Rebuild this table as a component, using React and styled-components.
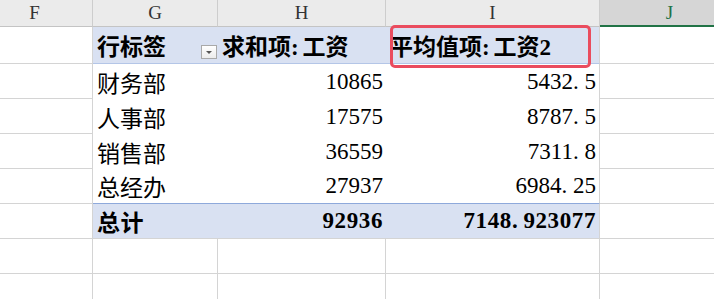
import React from "react";
import styled, { createGlobalStyle, css } from "styled-components";

const GlobalStyle = createGlobalStyle`
  html, body {
    margin: 0;
    padding: 0;
    background: #ffffff;
    overflow: hidden;
  }
  #root {
    width: 714px;
    height: 299px;
    overflow: hidden;
  }
`;

const GRID = "#d4d4d4";
const PIVOT_FILL = "#d9e1f2";
const PIVOT_LINE = "#b4c6e7";
const PIVOT_TOTAL_LINE = "#8ea9db";
const SELECT_GREEN = "#217346";

const FONT = `"Liberation Serif", "Noto Sans CJK SC", serif`;

// The sheet is scrolled a little to the right, so column F is partly hidden.
const Sheet = styled.div`
  display: grid;
  grid-template-columns: 116px 125px 168px 214px 140px;
  grid-template-rows: 27px 37px repeat(7, 35px);
  margin-left: -23px;
  font-family: ${FONT};
  color: #000;
`;

const ColHeader = styled.div`
  box-sizing: border-box;
  display: flex;
  align-items: center;
  justify-content: center;
  background: ${(p) => (p.$selected ? "#d6d6d6" : "#ebebeb")};
  border-right: 1px solid #cdcdcd;
  border-bottom: ${(p) =>
    p.$selected ? `2px solid ${SELECT_GREEN}` : "1px solid #c4c4c4"};
  color: ${(p) => (p.$selected ? SELECT_GREEN : "#333")};
  font-family: "Liberation Serif", serif;
  font-size: 19px;
  padding-top: ${(p) => (p.$selected ? "1px" : "0")};
`;

const kinds = {
  plain: css`
    background: #fff;
    border-right: 1px solid ${GRID};
    border-bottom: 1px solid ${GRID};
  `,
  head: css`
    background: ${PIVOT_FILL};
    border-bottom: 1px solid ${PIVOT_LINE};
    font-weight: 700;
  `,
  body: css`
    background: #fff;
  `,
  total: css`
    background: ${PIVOT_FILL};
    border-bottom: 1px solid ${GRID};
    font-weight: 700;
  `,
};

const Cell = styled.div`
  box-sizing: border-box;
  position: relative;
  display: flex;
  align-items: center;
  justify-content: ${(p) => (p.$right ? "flex-end" : "flex-start")};
  padding: 0 3px 0 4px;
  font-size: 23px;
  white-space: nowrap;
  ${(p) => kinds[p.$kind || "plain"]}
  ${(p) =>
    p.$edge &&
    css`
      border-right: 1px solid ${GRID};
    `}
  ${(p) =>
    p.$beforeTotal &&
    css`
      border-bottom: 1px solid ${PIVOT_TOTAL_LINE};
    `}
  ${(p) =>
    p.$kind === "total" &&
    css`
      letter-spacing: 0.6px;
    `}
`;

const Label = styled.span`
  flex: 1;
`;

const FilterButton = styled.span`
  box-sizing: border-box;
  align-self: flex-end;
  margin: 0 -2px 4px 0;
  width: 16px;
  height: 14px;
  display: flex;
  align-items: center;
  justify-content: center;
  border: 1px solid #a9a9a9;
  background: linear-gradient(#ffffff, #ececec);
`;

const Caret = styled.span`
  width: 0;
  height: 0;
  margin-top: 1px;
  border-left: 3px solid transparent;
  border-right: 3px solid transparent;
  border-top: 3px solid #555;
`;

// Half-width separators, as the sheet's CJK font draws them.
const Half = styled.span`
  display: inline-block;
  width: 0.5em;
  text-align: left;
  letter-spacing: 0;
`;

// Red annotation frame drawn over the "平均值项" header cell.
const Highlight = styled.div`
  position: absolute;
  z-index: 5;
  left: 4px;
  top: -2px;
  width: 201px;
  height: 43px;
  box-sizing: border-box;
  border: 3px solid #ea4c5e;
  border-radius: 5px;
  pointer-events: none;
`;

const Num = ({ value }) => {
  const [int, frac] = String(value).split(".");
  return (
    <span>
      {int}
      {frac !== undefined && (
        <>
          <Half>.</Half>
          {frac}
        </>
      )}
    </span>
  );
};

const Caption = ({ prefix, suffix }) => (
  <span>
    {prefix}
    <Half>:</Half>
    {suffix}
  </span>
);

const rows = [
  { dept: "财务部", sum: "10865", avg: "5432.5" },
  { dept: "人事部", sum: "17575", avg: "8787.5" },
  { dept: "销售部", sum: "36559", avg: "7311.8" },
  { dept: "总经办", sum: "27937", avg: "6984.25" },
];

const columns = ["F", "G", "H", "I", "J"];

export default function App() {
  return (
    <>
      <GlobalStyle />
      <Sheet>
        {columns.map((c) => (
          <ColHeader key={c} $selected={c === "J"}>
            {c}
          </ColHeader>
        ))}

        <Cell />
        <Cell $kind="head">
          <Label>行标签</Label>
          <FilterButton>
            <Caret />
          </FilterButton>
        </Cell>
        <Cell $kind="head">
          <Caption prefix="求和项" suffix="工资" />
        </Cell>
        <Cell $kind="head" $edge>
          <Caption prefix="平均值项" suffix="工资2" />
          <Highlight />
        </Cell>
        <Cell />

        {rows.map((r, i) => {
          const last = i === rows.length - 1;
          return (
            <React.Fragment key={r.dept}>
              <Cell />
              <Cell $kind="body" $beforeTotal={last}>
                {r.dept}
              </Cell>
              <Cell $kind="body" $right $beforeTotal={last}>
                <Num value={r.sum} />
              </Cell>
              <Cell $kind="body" $right $edge $beforeTotal={last}>
                <Num value={r.avg} />
              </Cell>
              <Cell />
            </React.Fragment>
          );
        })}

        <Cell />
        <Cell $kind="total">总计</Cell>
        <Cell $kind="total" $right>
          <Num value="92936" />
        </Cell>
        <Cell $kind="total" $right $edge>
          <Num value="7148.923077" />
        </Cell>
        <Cell />

        {[0, 1].map((r) =>
          columns.map((c) => <Cell key={`${r}-${c}`} />)
        )}
      </Sheet>
    </>
  );
}
